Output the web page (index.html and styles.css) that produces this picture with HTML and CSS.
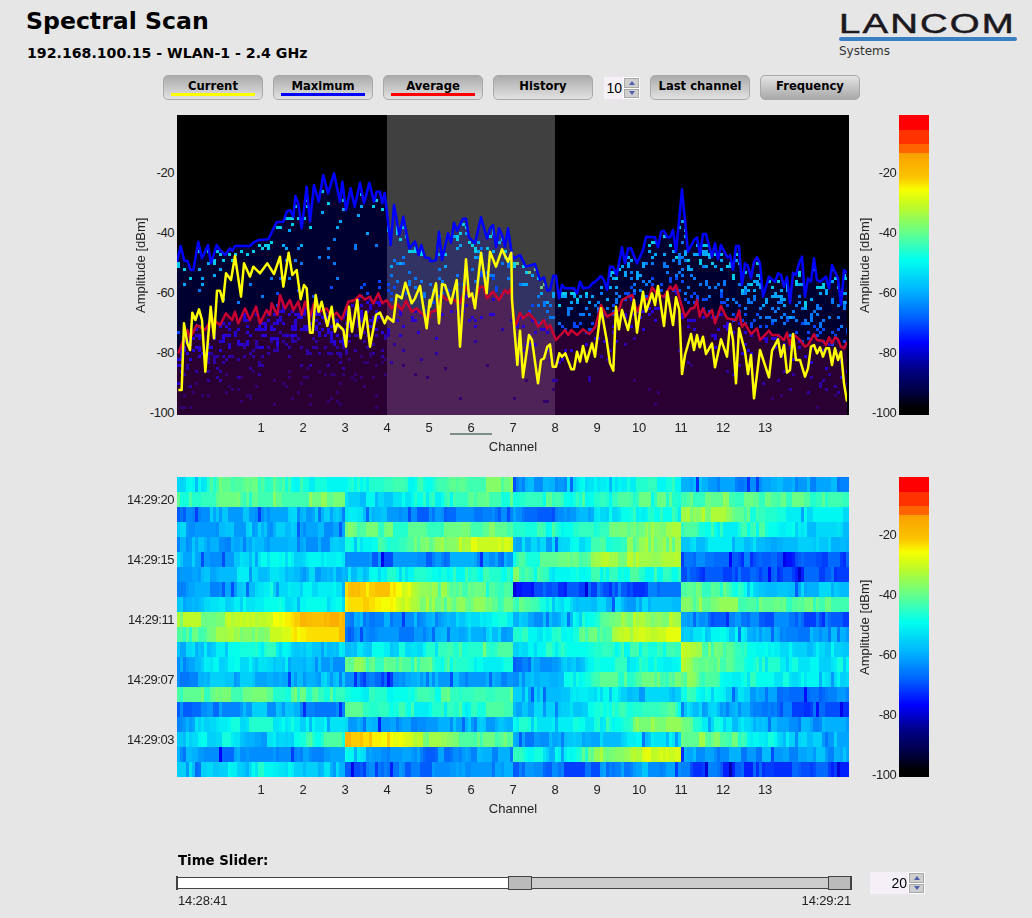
FILE: index.html
```html
<!DOCTYPE html>
<html lang="en">
<head>
<meta charset="utf-8">
<title>Spectral Scan</title>
<link rel="stylesheet" href="styles.css">
</head>
<body>
<header class="header">
  <div class="headings">
    <h1 class="title">Spectral Scan</h1>
    <h2 class="subtitle">192.168.100.15 - WLAN-1 - 2.4 GHz</h2>
  </div>
  <div class="logo">
    <div class="logo-word">LANCOM</div>
    <div class="logo-bar"></div>
    <div class="logo-sub">Systems</div>
  </div>
</header>

<nav class="toolbar">
  <button class="btn btn-sunken"><span>Current</span><i class="trace trace-yellow"></i></button>
  <button class="btn btn-sunken"><span>Maximum</span><i class="trace trace-blue"></i></button>
  <button class="btn btn-sunken"><span>Average</span><i class="trace trace-red"></i></button>
  <button class="btn btn-sunken"><span>History</span></button>
  <div class="spinner spinner-small">
    <span class="spinner-value">10</span>
    <span class="spinner-arrows"><b class="arrow arrow-up"></b><b class="arrow arrow-down"></b></span>
  </div>
  <button class="btn btn-sunken"><span>Last channel</span></button>
  <button class="btn btn-raised"><span>Frequency</span></button>
</nav>

<section class="chart chart-spectrum">
  <div class="axis-left">
    <div class="axis-title">Amplitude [dBm]</div>
    <div class="ticks">
      <div class="tick">-20</div><div class="tick">-40</div><div class="tick">-60</div><div class="tick">-80</div><div class="tick">-100</div>
    </div>
  </div>
  <canvas id="spectrum" class="plot" width="672" height="300"></canvas>
  <div class="axis-right">
    <div class="axis-title">Amplitude [dBm]</div>
    <div class="ticks">
      <div class="tick">-20</div><div class="tick">-40</div><div class="tick">-60</div><div class="tick">-80</div><div class="tick">-100</div>
    </div>
  </div>
  <div class="colorbar"></div>
  <div class="xaxis">
    <div class="xticks">
      <span>1</span><span>2</span><span>3</span><span>4</span><span>5</span><span class="current">6</span><span>7</span><span>8</span><span>9</span><span>10</span><span>11</span><span>12</span><span>13</span>
    </div>
    <div class="xlabel">Channel</div>
  </div>
</section>

<section class="chart chart-history">
  <div class="axis-left">
    <div class="ticks ticks-time">
      <div class="tick">14:29:20</div><div class="tick">14:29:15</div><div class="tick">14:29:11</div><div class="tick">14:29:07</div><div class="tick">14:29:03</div>
    </div>
  </div>
  <canvas id="history" class="plot" width="672" height="300"></canvas>
  <div class="axis-right">
    <div class="axis-title">Amplitude [dBm]</div>
    <div class="ticks">
      <div class="tick">-20</div><div class="tick">-40</div><div class="tick">-60</div><div class="tick">-80</div><div class="tick">-100</div>
    </div>
  </div>
  <div class="colorbar"></div>
  <div class="xaxis">
    <div class="xticks">
      <span>1</span><span>2</span><span>3</span><span>4</span><span>5</span><span>6</span><span>7</span><span>8</span><span>9</span><span>10</span><span>11</span><span>12</span><span>13</span>
    </div>
    <div class="xlabel">Channel</div>
  </div>
</section>

<section class="time">
  <div class="time-title">Time Slider:</div>
  <div class="time-row">
    <div class="slider">
      <div class="slider-fill"></div>
      <div class="slider-thumb"></div>
      <div class="slider-rest"></div>
      <div class="slider-thumb"></div>
    </div>
    <div class="spinner spinner-large">
      <span class="spinner-value">20</span>
      <span class="spinner-arrows"><b class="arrow arrow-up"></b><b class="arrow arrow-down"></b></span>
    </div>
  </div>
  <div class="time-labels"><span>14:28:41</span><span>14:29:21</span></div>
</section>
<script src="chart.js"></script>
</body>
</html>
```
FILE: styles.css
```css
* { box-sizing: border-box; }
html, body { margin: 0; padding: 0; }
body {
  width: 1032px;
  height: 918px;
  overflow: hidden;
  background: #e6e6e6;
  color: #000;
  font-family: "Liberation Sans", Arial, sans-serif;
  font-size: 13px;
}

.header {
  display: flex;
  justify-content: space-between;
  height: 75px;
  padding: 0 15px 0 26px;
}
.title {
  margin: 6px 0 0;
  font: bold 23.6px/30px "DejaVu Sans", Verdana, sans-serif;
}
.subtitle {
  margin: 8px 0 0 1px;
  font: bold 14.15px/18px "DejaVu Sans", Verdana, sans-serif;
}
.logo { width: 178px; padding-top: 12px; }
.logo-word {
  width: 124px;
  height: 24px;
  color: #1b1820;
  font: normal 27px/24px "Liberation Sans", Arial, sans-serif;
  letter-spacing: 1.5px;
  -webkit-text-stroke: .5px #1b1820;
  transform: scaleX(1.42);
  transform-origin: left center;
  white-space: nowrap;
}
.logo-bar { height: 4px; margin-top: 1px; background: #3a80c2; border-radius: 2px; }
.logo-sub {
  margin-top: 3px;
  color: #333;
  font: 12px/15px "DejaVu Sans", sans-serif;
}

.toolbar {
  display: flex;
  align-items: flex-start;
  gap: 10px;
  height: 40px;
  padding-left: 163px;
}
.btn {
  display: flex;
  flex-direction: column;
  align-items: center;
  width: 100px;
  height: 25px;
  margin: 0;
  padding: 3px 8px 0;
  border: 1px solid #a9a9a9;
  border-radius: 5px;
  color: #000;
  font: bold 11.6px/14px "DejaVu Sans", Verdana, sans-serif;
  white-space: nowrap;
}
.btn-sunken { background: linear-gradient(#ababab, #e2e2e2); }
.btn-raised { background: linear-gradient(#e4e4e4, #a8a8a8); }
.trace { display: block; width: 84px; height: 3px; }
.trace-yellow { background: #ff0; }
.trace-blue { background: #00f; }
.trace-red { background: #f00; }

.spinner { display: flex; align-items: stretch; height: 22px; margin-top: 2px; background: #f5f0f8; }
.spinner-small { width: 36px; margin-left: 1px; }
.spinner-large { width: 55px; margin-top: 0; margin-left: 18px; }
.spinner-value { flex: 1; padding-right: 1px; font: 14px/22px "Liberation Sans", Arial, sans-serif; text-align: right; }
.spinner-arrows { display: flex; flex-direction: column; width: 17px; background: #fff; padding: 1px; gap: 1px; }
.arrow { display: flex; flex: 1; align-items: center; justify-content: center; background: #cfcfcf; border: 1px solid #a8a8a8; }
.arrow::after { content: ""; border-left: 3.5px solid transparent; border-right: 3.5px solid transparent; }
.arrow-up::after { border-bottom: 4px solid #4f5fa8; }
.arrow-down::after { border-top: 4px solid #4f5fa8; }

.chart {
  display: grid;
  grid-template-columns: 177px 672px 50px 30px;
  grid-template-rows: 300px auto;
}
.chart-history { margin-top: 23px; }
.plot { display: block; width: 672px; height: 300px; }
.colorbar {
  background: linear-gradient(to bottom,
    #f00 0, #f00 15px,
    #ff3200 15px, #ff3200 29px,
    #ff6400 29px, #ff6400 38px,
    #fa9f00 38px, #fbc400 62px, #f8ff00 75px,
    #bcfa28 92px, #64ff8c 118px, #00fff0 145px,
    #00b4ff 175px, #0064ff 202px, #0000ff 228px,
    #00008c 252px, #00003c 278px, #000 293px);
}
.axis-left { display: flex; justify-content: flex-end; padding-right: 3px; }
.axis-right { display: flex; padding-left: 9px; padding-right: 4px; }
.axis-title {
  display: flex;
  align-items: center;
  justify-content: center;
  width: 14px;
  height: 300px;
  writing-mode: vertical-rl;
  transform: rotate(180deg);
  color: #222;
  line-height: 14px;
  white-space: nowrap;
}
.ticks { flex: 1; padding-top: 28px; text-align: right; color: #222; letter-spacing: -.45px; }
.ticks-time { padding-top: 0; margin-top: -7px; }
.tick { height: 60px; line-height: 60px; }
.axis-left .ticks { flex: 0 0 26px; }
.axis-left .ticks-time { flex: 0 0 60px; }

.xaxis { grid-column: 2; color: #222; }
.xticks { display: flex; margin-top: 5px; padding-left: 63px; letter-spacing: -.3px; }
.xticks span { width: 42px; height: 15px; line-height: 16px; text-align: center; }
.xticks .current { border-bottom: 2px solid #7d8f88; }
.xlabel { margin-top: 5px; line-height: 14px; text-align: center; }

.time { margin-top: 37px; padding-left: 176px; }
.time-title { padding-left: 2px; font: bold 13.33px/16px "DejaVu Sans", Verdana, sans-serif; }
.time-row { display: flex; align-items: center; height: 22px; margin-top: 3px; }
.slider {
  display: flex;
  align-items: center;
  width: 676px;
  height: 14px;
  border-left: 2px solid #444;
}
.slider-fill { width: 330px; height: 12px; background: #fff; border: 1px solid #444; border-left: 0; border-right: 0; }
.slider-rest { flex: 1; height: 12px; background: #ccc; border: 1px solid #444; border-left: 0; border-right: 0; }
.slider-thumb { width: 24px; height: 14px; background: #bbb; border: 1px solid #444; }
.slider-thumb:last-child { border-right-width: 2px; }
.time-labels { display: flex; justify-content: space-between; width: 675px; padding-left: 2px; color: #222; line-height: 14px; letter-spacing: -.15px; }
```
FILE: chart.js
```js
(function () {
  var PLOT_X = 177, PLOT_Y = 115;

  /* ---- colour scale, indexed by pixel offset along the colour bar ---- */
  var STOPS = [
    [38, 250, 159, 0], [62, 251, 196, 0], [75, 248, 255, 0], [92, 188, 250, 40],
    [118, 100, 255, 140], [145, 0, 255, 240], [175, 0, 180, 255], [202, 0, 100, 255],
    [228, 0, 0, 255], [252, 0, 0, 140], [278, 0, 0, 60], [293, 0, 0, 0]
  ];
  function colour(dB) {
    var p = -dB * 3 - 2;
    p = Math.round(p / 4) * 4;
    if (p <= STOPS[0][0]) return 'rgb(250,159,0)';
    for (var i = 1; i < STOPS.length; i++) {
      if (p <= STOPS[i][0]) {
        var a = STOPS[i - 1], b = STOPS[i], t = (p - a[0]) / (b[0] - a[0]);
        return 'rgb(' + Math.round(a[1] + (b[1] - a[1]) * t) + ',' +
          Math.round(a[2] + (b[2] - a[2]) * t) + ',' +
          Math.round(a[3] + (b[3] - a[3]) * t) + ')';
      }
    }
    return '#000';
  }

  var seed = 20240;
  function rnd() {
    seed = (seed * 16807) % 2147483647;
    return (seed - 1) / 2147483646;
  }

  /* ---- traces, read off three overlapping views ---- */
  function trace(parts) {
    var out = [];
    parts.forEach(function (part) {
      var pts = part.pts;
      for (var i = 0; i + 1 < pts.length; i += 2) {
        var x = part.ox + pts[i] / 3;
        if (x >= part.from && x < part.to) {
          out.push([x - PLOT_X, part.oy + pts[i + 1] / 3 - PLOT_Y]);
        }
      }
    });
    return out;
  }
  function view(pts, ox, oy, from, to) { return { pts: pts, ox: ox, oy: oy, from: from, to: to }; }

  var blue = trace([
    view([141,305,152,258,163,302,172,302,182,330,190,330,205,245,216,295,234,255,243,310,260,255,270,270,285,285,300,265,307,272,315,258,360,258,370,248,385,240,415,238,440,186,460,185,470,155,480,150,490,170,496,108,505,130,515,205,530,80,540,185,552,75,566,125,580,45,594,100,612,40,630,125,637,65,648,150,662,85,674,140,690,68,702,130,718,68,732,125,740,95,750,95,757,130,764,98,782,255,792,135,808,225,820,170,838,265,855,245,866,285,874,255,885,292,899,295], 130, 160, 0, 430),
    view([0,303,9,303,18,300,27,215,36,300,54,220,63,248,72,188,81,212,99,176,108,176,117,232,135,250,153,172,171,235,180,205,189,195,198,262,207,205,216,225,225,260,234,205,246,285,252,295,270,285,288,320,315,312,330,360,342,352,352,392,360,390,370,347,378,347,387,415,396,375,405,385,432,385,441,400,450,365,460,385,478,382,487,370,496,365,513,348,522,360,531,390,540,320,549,320,560,345,576,262,585,310,594,265,603,265,621,310,639,270,648,230,675,232,684,262,693,215,702,212,712,232,720,232,729,210,738,275,756,88,774,275,792,240,801,232,810,285,819,222,828,222,846,290,855,250,864,298,873,255,892,292,899,290], 430, 160, 430, 730),
    view([90,225,99,270,108,198,117,198,126,315,135,250,144,258,153,295,162,245,171,232,180,250,189,350,207,290,225,305,234,280,243,285,252,320,261,290,270,370,279,278,288,285,297,250,306,230,315,350,324,295,333,305,342,235,351,300,360,305,378,290,387,325,396,255,405,275,414,295,423,375,432,270,441,278], 700, 180, 730, 860)
  ]);
  var red = trace([
    view([145,580,160,540,172,510,180,535,200,495,225,510,245,475,270,495,288,460,306,480,315,455,325,490,345,445,360,480,378,440,390,490,410,450,420,465,425,430,442,465,450,405,465,445,480,420,490,450,505,425,515,465,525,425,540,470,552,430,570,455,590,445,605,470,620,458,635,478,655,425,675,420,690,405,705,418,720,410,730,430,745,400,757,430,770,420,785,445,800,430,815,450,828,422,845,455,860,445,885,470,899,470], 130, 160, 0, 430),
    view([0,457,20,450,36,405,50,420,63,415,90,430,108,380,126,410,135,420,150,380,162,380,171,415,189,395,207,420,225,390,234,400,243,385,252,480,258,495,270,458,279,475,297,460,315,480,324,500,342,480,351,505,360,495,378,540,405,510,415,525,424,510,441,525,459,508,478,522,496,500,513,435,531,470,549,460,567,450,576,420,590,412,607,405,621,455,639,420,657,415,666,382,684,405,702,410,720,380,729,390,738,375,750,420,765,470,783,445,792,445,801,420,809,470], 430, 160, 430, 700),
    view([0,405,9,385,20,410,36,390,45,430,63,378,81,415,108,420,117,392,126,440,135,430,153,462,171,445,180,480,207,452,216,465,234,465,252,480,261,458,270,495,279,462,300,480,315,500,324,495,342,462,351,480,369,482,378,495,387,472,396,490,405,472,414,478,423,500,432,505,441,485], 700, 180, 700, 860)
  ]);
  var yellow = trace([
    view([145,690,155,690,162,490,172,550,180,570,187,458,196,480,207,448,216,480,226,635,242,440,252,535,261,392,270,392,279,425,288,340,303,360,315,288,333,410,342,310,360,350,370,320,390,340,412,310,432,342,450,290,460,380,476,278,487,345,500,330,512,418,522,375,530,385,540,518,548,518,557,405,566,455,575,425,592,498,605,440,615,515,622,492,640,510,648,560,657,440,666,515,682,420,692,535,708,455,720,560,738,465,750,458,764,490,772,470,790,485,800,405,815,415,826,368,845,430,855,415,870,378,890,505,899,420], 130, 160, 0, 430),
    view([0,440,18,370,27,490,36,373,45,375,63,430,80,360,90,560,108,298,117,410,126,400,135,445,153,278,170,400,180,275,198,320,216,268,234,305,244,278,246,420,262,615,270,512,279,652,297,525,306,540,324,670,333,600,342,595,352,560,360,553,368,620,378,620,388,580,396,590,406,580,424,628,432,628,441,575,450,605,459,558,470,605,486,550,495,590,513,445,530,540,540,610,550,632,558,440,567,508,576,450,594,510,612,420,621,518,639,395,648,455,666,400,675,435,684,378,702,498,712,395,729,495,738,412,748,450,756,642,765,585,783,522,792,570,801,525,809,562], 430, 160, 430, 700),
    view([0,500,9,470,18,522,36,490,45,562,63,478,81,530,90,432,99,480,108,610,117,445,135,515,144,582,153,525,162,655,180,510,207,592,216,512,234,478,243,530,252,495,261,578,270,570,279,462,288,540,300,540,315,590,324,565,333,500,342,495,351,520,360,502,369,530,378,505,387,505,396,555,405,505,414,540,423,515,432,610,441,665], 700, 180, 700, 860)
  ]);

  function yAt(line, x) {
    if (x <= line[0][0]) return line[0][1];
    for (var i = 1; i < line.length; i++) {
      if (x <= line[i][0]) {
        var a = line[i - 1], b = line[i];
        return a[1] + (b[1] - a[1]) * (x - a[0]) / ((b[0] - a[0]) || 1);
      }
    }
    return line[line.length - 1][1];
  }
  function stroke(ctx, line, col) {
    ctx.beginPath();
    line.forEach(function (p, i) { if (i) ctx.lineTo(p[0], p[1]); else ctx.moveTo(p[0], p[1]); });
    ctx.strokeStyle = col;
    ctx.lineWidth = 2.5;
    ctx.lineJoin = 'round';
    ctx.stroke();
  }
  function fillUnder(ctx, line, col) {
    ctx.beginPath();
    ctx.moveTo(0, 300);
    ctx.lineTo(0, line[0][1]);
    line.forEach(function (p) { ctx.lineTo(p[0], p[1]); });
    ctx.lineTo(672, line[line.length - 1][1]);
    ctx.lineTo(672, 300);
    ctx.closePath();
    ctx.fillStyle = col;
    ctx.fill();
  }

  function drawSpectrum() {
    var ctx = document.getElementById('spectrum').getContext('2d');
    ctx.fillStyle = '#000';
    ctx.fillRect(0, 0, 672, 300);

    /* selected channel band sits behind the translucent fills */
    ctx.fillStyle = 'rgb(64,64,64)';
    ctx.fillRect(210, 0, 168, 300);
    fillUnder(ctx, blue, 'rgba(0,0,240,0.2)');
    fillUnder(ctx, red, 'rgba(150,0,60,0.28)');

    for (var c = 0; c < 224; c++) {
      var x = c * 3, by = yAt(blue, x + 1), ry = yAt(red, x + 1);
      var upper = x < 210 ? 0.035 : x < 378 ? 0.11 : 0.2;
      var lower = x < 210 ? 0.45 : 0.14;
      var plateau = x < 135 ? 0.4 : x < 210 ? 0.12 : 0.35;
      for (var y = Math.ceil(by / 3) * 3 + 3; y < 294; y += 3) {
        var col = null, f = (y - by) / Math.max(ry - by, 1);
        if (y < ry) {
          var near = y - by < 9 ? plateau : upper;
          if (rnd() < near) {
            col = f < 0.15 ? 'rgb(0,205,235)' : f < 0.4 ? 'rgb(0,165,255)' : f < 0.75 ? 'rgb(0,120,255)' : 'rgb(0,70,255)';
            if (x > 330 && x < 378 && f < 0.2 && rnd() < 0.5) col = 'rgb(110,200,130)';
          }
        } else {
          var d = y - ry;
          if (rnd() < lower * Math.exp(-d / (x < 210 ? 40 : 30))) {
            col = d < 30 ? 'rgb(38,0,215)' : d < 55 ? 'rgb(44,0,165)' : 'rgb(50,0,110)';
          }
        }
        if (col) {
          ctx.fillStyle = col;
          ctx.fillRect(x, y, 3, 3);
        }
      }
    }

    stroke(ctx, blue, '#0000ff');
    stroke(ctx, red, '#c80032');
    stroke(ctx, yellow, '#ffff00');

    ctx.fillStyle = '#000';
    ctx.fillRect(670, 0, 2, 300);
  }

  /* ---- waterfall: level of each row at 16 points across the band ---- */
  var ROWS = [
    [-56,-42,-41,-47, -50,-47,-47,-40, -62,-60,-50,-47, -60,-63,-62,-62],
    [-44,-42,-41,-39, -55,-54,-48,-43, -44,-44,-47,-44, -42,-39,-44,-42],
    [-66,-58,-60,-58, -52,-60,-66,-66, -64,-66,-54,-48, -34,-37,-46,-50],
    [-58,-60,-58,-60, -40,-42,-43,-40, -42,-47,-44,-36, -40,-48,-46,-56],
    [-60,-62,-60,-60, -50,-44,-38,-30, -56,-58,-46,-37, -56,-54,-57,-58],
    [-58,-60,-53,-52, -66,-66,-65,-62, -45,-44,-37,-33, -66,-68,-70,-71],
    [-62,-56,-54,-58, -56,-50,-47,-46, -40,-52,-46,-46, -68,-70,-72,-70],
    [-64,-62,-52,-52, -21,-23,-36,-44, -72,-70,-68,-68, -40,-42,-55,-58],
    [-57,-52,-52,-50, -22,-24,-38,-40, -40,-52,-58,-58, -37,-40,-40,-40],
    [-36,-35,-30,-19, -62,-62,-62,-50, -60,-60,-43,-34, -64,-66,-66,-68],
    [-44,-38,-34,-22, -64,-64,-65,-56, -48,-50,-40,-30, -54,-52,-60,-62],
    [-60,-52,-48,-54, -56,-52,-50,-42, -52,-48,-46,-46, -33,-44,-48,-54],
    [-60,-52,-50,-60, -38,-42,-42,-48, -64,-60,-50,-48, -33,-42,-50,-52],
    [-62,-58,-60,-58, -66,-68,-60,-60, -60,-56,-44,-42, -38,-46,-50,-54],
    [-40,-42,-43,-43, -45,-50,-46,-42, -56,-58,-52,-54, -46,-54,-62,-64],
    [-68,-62,-58,-62, -44,-44,-48,-46, -58,-58,-50,-44, -52,-60,-66,-70],
    [-62,-50,-50,-52, -58,-66,-60,-58, -50,-50,-50,-38, -42,-52,-60,-60],
    [-56,-50,-58,-46, -20,-24,-36,-40, -62,-62,-56,-54, -37,-40,-50,-58],
    [-62,-64,-62,-62, -52,-62,-66,-62, -48,-52,-38,-30, -60,-62,-63,-60],
    [-58,-54,-50,-56, -70,-66,-66,-62, -66,-68,-66,-60, -68,-70,-70,-70]
  ];
  function drawHistory() {
    var ctx = document.getElementById('history').getContext('2d');
    ROWS.forEach(function (row, r) {
      var noise = 0;
      for (var c = 0; c < 224; c++) {
        var block = Math.floor(c / 56), sub = (c % 56) / 14;
        var i = Math.floor(sub), t = sub - i;
        var a = row[block * 4 + i];
        var b = i < 3 ? row[block * 4 + i + 1] : a;
        var level = a + (b - a) * t;
        if (c % 56 === 0 || rnd() < 0.55) noise = (rnd() - 0.5) * 2 * (level > -34 ? 2.5 : 4.5);
        var value = level + noise;
        if (level < -48 && rnd() < 0.05) value -= 8;
        ctx.fillStyle = colour(value);
        ctx.fillRect(c * 3, r * 15, 3, 15);
      }
    });
  }

  drawSpectrum();
  drawHistory();
})();
```
